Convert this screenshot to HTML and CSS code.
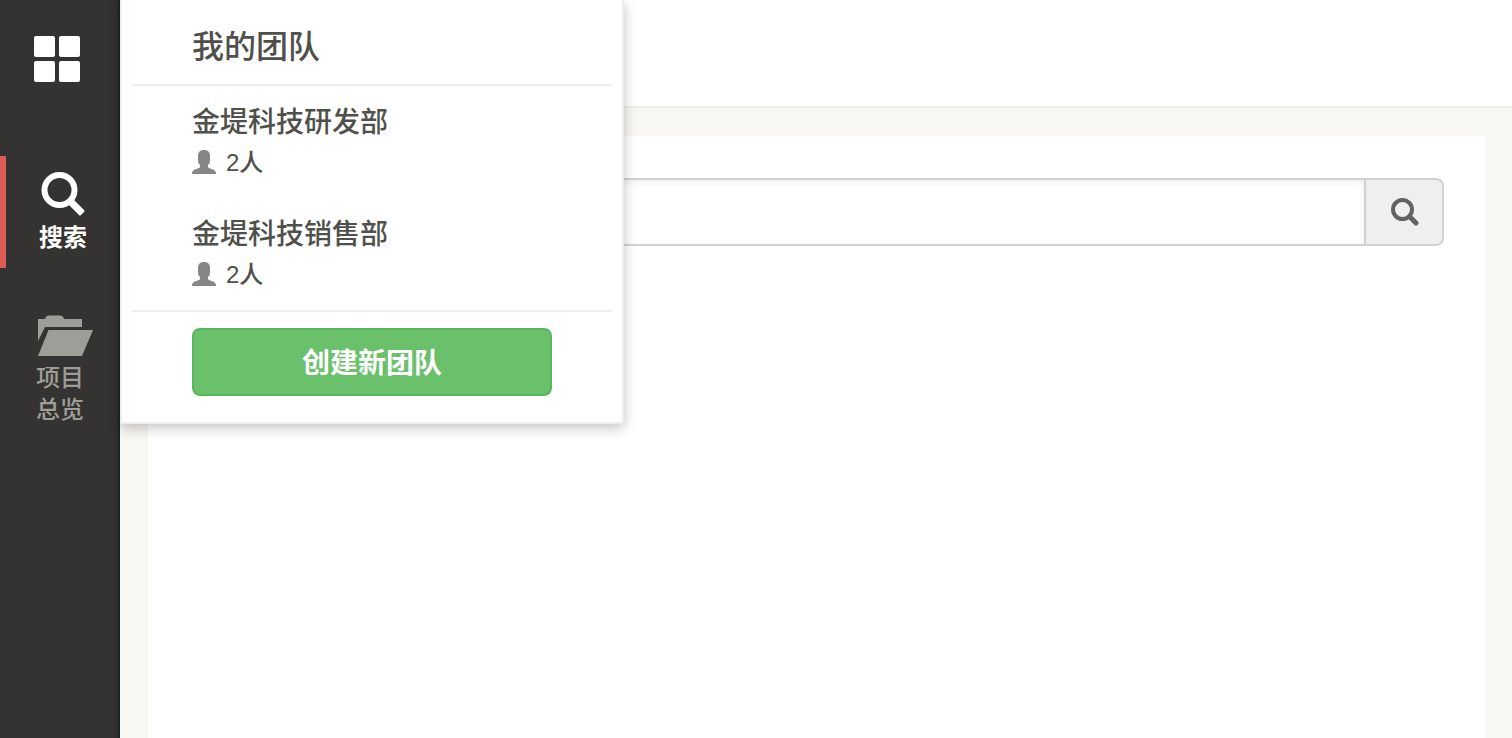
FILE: index.html
```html
<!DOCTYPE html>
<html lang="zh-CN">

<head>
    <meta charset="utf-8" />
    <meta name="viewport" content="width=device-width, initial-scale=1" />
    <title>搜索</title>
    <link rel="stylesheet" href="styles.css">
</head>

<body>
    <div class="layout">
        <nav class="sidebar">
            <button class="teamToggle" type="button" aria-label="我的团队">
                <svg width="46" height="46" viewBox="0 0 46 46" fill="currentColor">
                    <rect width="21" height="21" rx="2" />
                    <rect x="25" width="21" height="21" rx="2" />
                    <rect y="25" width="21" height="21" rx="2" />
                    <rect x="25" y="25" width="21" height="21" rx="2" />
                </svg>
            </button>
            <a class="navItem active" href="#">
                <svg width="44" height="44" viewBox="0 0 44 44">
                    <circle cx="18.5" cy="18" r="15" fill="none" stroke="currentColor" stroke-width="6" />
                    <path d="M32 27L43 38Q44 39 43 40L40 43Q39 44 38 43L27 32Z" fill="currentColor" />
                </svg>
                <span>搜索</span>
            </a>
            <a class="navItem projects" href="#">
                <svg width="58" height="42" viewBox="0 0 58 42" fill="currentColor">
                    <path d="M2 5H9Q10 1.5 13 1.5H24Q27 1.5 28 5H46V13H9L2 27Z" />
                    <path d="M12.5 16H57L46 42H2Z" />
                </svg>
                <span>项目<br>总览</span>
            </a>
        </nav>

        <section class="teamMenu">
            <h2 class="menuTitle">我的团队</h2>
            <ul class="teamList">
                <li>
                    <a class="team" href="#">
                        <span class="teamName">金堤科技研发部</span>
                        <span class="teamCount">
                            <svg width="24" height="24" viewBox="0 0 24 24" fill="currentColor">
                                <path d="M12 0C8 0 6 2 6 6V10C6 13 7 14 8 15V17C7 19 0 19 0 23V24H24V23C24 19 17 19 16 17V15C17 14 18 13 18 10V6C18 2 16 0 12 0Z" />
                            </svg>
                            2人
                        </span>
                    </a>
                </li>
                <li>
                    <a class="team" href="#">
                        <span class="teamName">金堤科技销售部</span>
                        <span class="teamCount">
                            <svg width="24" height="24" viewBox="0 0 24 24" fill="currentColor">
                                <path d="M12 0C8 0 6 2 6 6V10C6 13 7 14 8 15V17C7 19 0 19 0 23V24H24V23C24 19 17 19 16 17V15C17 14 18 13 18 10V6C18 2 16 0 12 0Z" />
                            </svg>
                            2人
                        </span>
                    </a>
                </li>
            </ul>
            <div class="menuFooter">
                <button class="createBtn" type="button">创建新团队</button>
            </div>
        </section>

        <div class="page">
            <header class="header"></header>
            <main class="content">
                <form class="searchForm">
                    <input class="searchInput" type="text" name="q" aria-label="搜索">
                    <button class="searchBtn" type="submit" aria-label="搜索">
                        <svg width="30" height="30" viewBox="0 0 30 30">
                            <circle cx="13.5" cy="12.5" r="9.5" fill="none" stroke="currentColor" stroke-width="4" />
                            <path d="M21 20L27 26" fill="none" stroke="currentColor" stroke-width="5" stroke-linecap="round" />
                        </svg>
                    </button>
                </form>
            </main>
        </div>
    </div>
</body>

</html>
```

FILE: styles.css
```css
body {
    margin: 0;
    font-family: "Liberation Sans", "Noto Sans CJK SC", sans-serif;
    font-size: 28px;
    font-weight: 500;
    color: #50504b;
    background-color: #f8f7f3;
}

a {
    color: inherit;
    text-decoration: none;
}

svg {
    display: block;
    flex: none;
}

button, input {
    margin: 0;
    padding: 0;
    font-family: inherit;
    box-sizing: border-box;
}

button {
    cursor: pointer;
}

.layout {
    position: relative;
    display: flex;
    min-height: 100vh;
}

/* Sidebar */
.sidebar {
    flex: none;
    width: 120px;
    box-sizing: border-box;
    border-right: 2px solid #1b2528;
    background-color: #353331;
    box-shadow: inset -8px 0 8px -8px rgba(0, 0, 0, 0.2);
    color: #9e9d98;
}

.teamToggle {
    display: block;
    padding: 36px 34px;
    margin-bottom: 38px;
    border: 0;
    background: none;
    color: #fff;
}

.navItem {
    display: flex;
    flex-direction: column;
    align-items: center;
    height: 112px;
    padding-top: 16px;
    padding-left: 2px;
    box-sizing: border-box;
    border-left: 6px solid transparent;
    font-size: 24px;
    line-height: 32px;
}

.navItem span {
    margin-top: 6px;
}

.navItem.active {
    border-left-color: #df5d57;
    color: #fff;
    font-weight: bold;
}

.navItem.projects {
    align-items: flex-start;
    height: auto;
    margin-top: 30px;
    padding-left: 30px;
}

/* Team menu, open over the page */
.teamMenu {
    position: absolute;
    top: 0;
    left: 120px;
    width: 504px;
    box-sizing: border-box;
    padding: 0 10px;
    border: 2px solid #eeeeea;
    border-top: 0;
    background-color: #fff;
    box-shadow: 0 4px 12px rgba(0, 0, 0, 0.24);
}

.menuTitle {
    margin: 0;
    padding: 27px 60px 17px;
    border-bottom: 2px solid #edf0f3;
    font-size: 32px;
    font-weight: inherit;
    line-height: 40px;
}

.teamList {
    margin: 0;
    padding: 0;
    list-style: none;
}

.team {
    display: block;
    padding: 17px 60px 15px;
    line-height: 40px;
}

.teamName, .teamCount {
    display: flex;
    align-items: center;
}

.teamCount {
    gap: 10px;
    font-size: 24px;
}

.teamCount svg {
    margin-bottom: 2px;
    color: #868686;
}

.menuFooter {
    padding: 16px 60px 26px;
    border-top: 2px solid #edf0f3;
}

.createBtn {
    width: 100%;
    height: 68px;
    padding-bottom: 2px;
    border: 2px solid #58b55a;
    border-radius: 8px;
    background-color: #6bc06c;
    color: #fff;
    font-size: 28px;
    font-weight: bold;
}

/* Page */
.page {
    display: flex;
    flex: 1;
    flex-direction: column;
}

.header {
    height: 106px;
    border-bottom: 2px solid #eeeeea;
    background-color: #fff;
}

.content {
    flex: 1;
    margin: 28px 26px 0 28px;
    padding: 42px;
    background-color: #fff;
}

.searchForm {
    display: flex;
    height: 68px;
}

.searchInput {
    flex: 1;
    min-width: 0;
    padding: 0 20px;
    border: 2px solid #d1d1d1;
    border-radius: 8px 0 0 8px;
    box-shadow: inset 0 2px 6px rgba(0, 0, 0, 0.08);
    color: inherit;
    font-size: 28px;
}

.searchBtn {
    display: flex;
    align-items: center;
    justify-content: center;
    width: 78px;
    border: 2px solid #d1d1d1;
    border-left: 0;
    border-radius: 0 8px 8px 0;
    background-color: #efefef;
    color: #636363;
}
```
